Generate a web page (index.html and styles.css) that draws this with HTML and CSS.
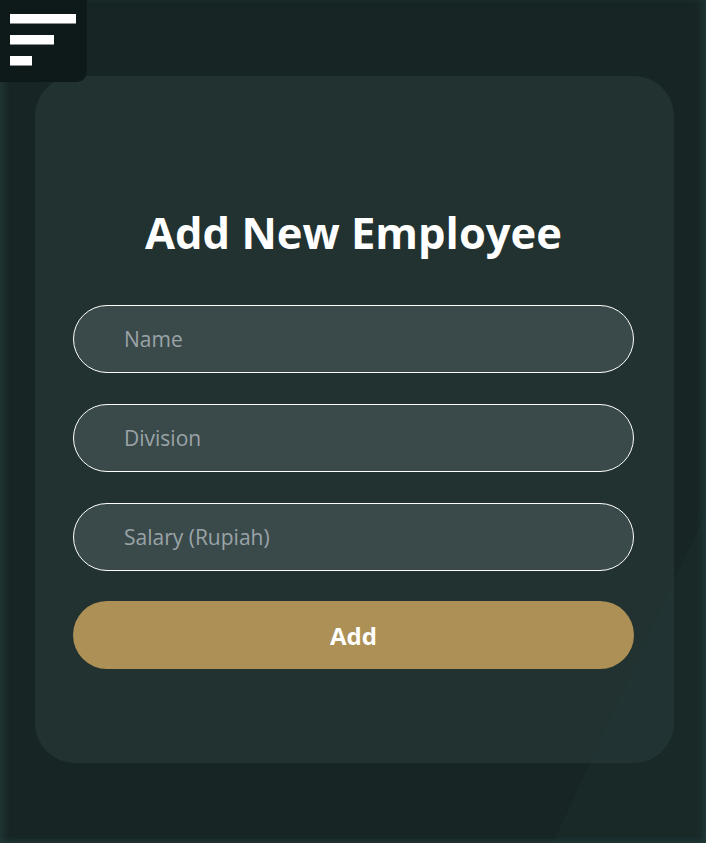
FILE: index.html
```html
<!DOCTYPE html>
<html lang="en">
<head>
<meta charset="utf-8">
<title>Add New Employee</title>
<link rel="stylesheet" href="styles.css">
</head>
<body>
<div class="page">
  <button class="menu" aria-label="Menu">
    <span class="bar bar-long"></span>
    <span class="bar bar-mid"></span>
    <span class="bar bar-short"></span>
  </button>
  <main class="wrap">
    <form class="card">
      <h1 class="title">Add New Employee</h1>
      <input class="field" type="text" placeholder="Name">
      <input class="field" type="text" placeholder="Division">
      <input class="field" type="text" placeholder="Salary (Rupiah)">
      <button class="submit" type="button">Add</button>
    </form>
  </main>
  <div class="sheen"></div>
</div>
</body>
</html>
```
FILE: styles.css
```css
* { box-sizing: border-box; }
html, body {
  margin: 0;
  padding: 0;
  width: 706px;
  height: 843px;
  overflow: hidden;
  background: #172624;
  font-family: "Open Sans", "Noto Sans", sans-serif;
}
.page {
  position: relative;
  width: 706px;
  height: 843px;
  background: #172624;
  box-shadow: inset 7px 0 8px -4px #23393a, inset -7px 0 8px -4px #23393a, inset 0 -6px 6px -4px #23393a;
}
.menu {
  position: absolute;
  top: 0;
  left: 0;
  width: 87px;
  height: 82px;
  background: #0e1a19;
  border: none;
  border-bottom-right-radius: 10px;
  padding: 14px 0 0 10px;
  display: flex;
  flex-direction: column;
  gap: 12px;
  z-index: 2;
}
.bar {
  display: block;
  height: 9px;
  background: #ffffff;
  box-shadow: 0 1px 0 #8a8f8f;
}
.bar-long { width: 66px; }
.bar-mid { width: 44px; }
.bar-short { width: 22px; }
.wrap {
  padding: 76px 0 0 35px;
}
.card {
  width: 639px;
  height: 687px;
  background: #213231;
  border-radius: 40px;
  padding: 125px 40px 0 38px;
  display: flex;
  flex-direction: column;
  gap: 31px;
}
.title {
  margin: 0 0 10px;
  text-align: center;
  color: #ffffff;
  font-size: 43.5px;
  font-weight: 700;
  line-height: 63px;
}
.field {
  height: 68px;
  width: 561px;
  border: 1px solid #ffffff;
  border-radius: 34px;
  background: #3a4a4a;
  padding: 0 0 0 50px;
  font-family: inherit;
  font-size: 21px;
  color: #ffffff;
  outline: none;
}
.field::placeholder { color: #9aa3a7; }
.submit {
  margin-top: -1px;
  height: 68px;
  width: 561px;
  border: none;
  border-radius: 34px;
  background: #ac9056;
  color: #ffffff;
  font-family: inherit;
  font-size: 24px;
  font-weight: 700;
}
.sheen {
  position: absolute;
  inset: 0;
  pointer-events: none;
  background: rgba(40, 62, 72, 0.12);
  clip-path: polygon(553px 843px, 760px 395px, 706px 395px, 706px 843px);
}
```
